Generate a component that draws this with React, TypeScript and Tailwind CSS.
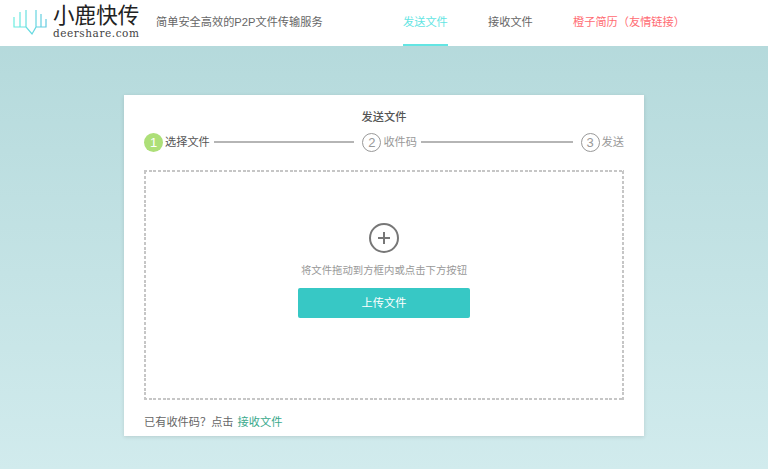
const sans = "font-['Helvetica_Neue','Liberation_Sans','Noto_Sans_CJK_SC',sans-serif]";

function Logo() {
  return (
    <svg width="36" height="30" viewBox="0 0 36 30" fill="none" className="shrink-0">
      <defs>
        <linearGradient id="lg" gradientUnits="userSpaceOnUse" x1="0" y1="0" x2="36" y2="0">
          <stop offset="0" stopColor="#6beee0" />
          <stop offset="1" stopColor="#62c6e0" />
        </linearGradient>
      </defs>
      <path
        d="M1 10V20H7V5V20H13V3V20L19 27L23 20V3V20H28V7V20H33V12"
        stroke="url(#lg)"
        strokeWidth="1.2"
      />
    </svg>
  );
}

function Step({ n, label, active }: { n: number; label: string; active?: boolean }) {
  return (
    <div className="flex items-center shrink-0">
      <div
        className={
          active
            ? "w-[19px] h-[19px] rounded-full bg-[#addf78] text-white text-[13px] leading-[19px] text-center"
            : "w-[19px] h-[19px] rounded-full border border-[#999] text-[#999] text-[13px] leading-[17px] text-center"
        }
      >
        {n}
      </div>
      <span className={active ? "ml-[2px] text-[11.2px] text-[#555]" : "ml-[2px] text-[11.2px] text-[#999]"}>{label}</span>
    </div>
  );
}

export default function App() {
  return (
    <div className={`${sans} w-[768px] h-[469px] overflow-hidden flex flex-col bg-gradient-to-b from-[#b2d8da] to-[#d1ebed]`}>
      <header className="h-[46px] bg-white flex items-stretch shrink-0">
        <div className="flex items-start pl-[13px] w-[156px] shrink-0">
          <div className="pt-[7px]">
            <Logo />
          </div>
          <div className="ml-[4px] pt-[4px] flex flex-col items-start">
            <span className="text-[21.5px] leading-[24px] text-[#222] tracking-[0.1px] whitespace-nowrap">小鹿快传</span>
            <span className="text-[10.5px] leading-[10px] text-[#444] tracking-[0.55px] font-['DejaVu_Serif',serif]">deershare.com</span>
          </div>
        </div>
        <div className="flex items-center pb-[1px] text-[11.2px] text-[#666] w-[247px] shrink-0">简单安全高效的P2P文件传输服务</div>
        <nav className="flex text-[11.2px]">
          <a className="w-[45px] border-b-2 border-[#63e5e3] text-[#63e5e3] flex items-center whitespace-nowrap">发送文件</a>
          <a className="ml-[40px] w-[45px] pb-[2px] text-[#666] flex items-center whitespace-nowrap">接收文件</a>
          <a className="ml-[40px] pb-[2px] text-[#ff6b72] flex items-center whitespace-nowrap">橙子简历（友情链接）</a>
        </nav>
      </header>

      <main className="mt-[49px] mx-auto w-[520px] h-[341px] bg-white shadow-[0_1px_4px_rgba(0,0,0,0.12)] px-[20px] flex flex-col">
        <h2 className="mt-[14px] text-center text-[11.2px] leading-[16px] font-medium text-[#555]">发送文件</h2>
        <div className="mt-[7px] flex items-center h-[20px]">
          <Step n={1} label="选择文件" active />
          <div className="w-[141px] h-[2px] bg-[#b5b5b5] ml-[4px] mr-[8px]" />
          <Step n={2} label="收件码" />
          <div className="w-[152px] h-[2px] bg-[#b5b5b5] ml-[4px] mr-[8px]" />
          <Step n={3} label="发送" />
        </div>
        <div className="mt-[18px] h-[230px] flex flex-col items-center [background:repeating-linear-gradient(90deg,#c6c6c6_0_3px,transparent_3px_4.7px)_top/100%_2px_no-repeat,repeating-linear-gradient(90deg,#c6c6c6_0_3px,transparent_3px_4.7px)_bottom/100%_2px_no-repeat,repeating-linear-gradient(0deg,#c6c6c6_0_3px,transparent_3px_4.7px)_left/2px_100%_no-repeat,repeating-linear-gradient(0deg,#c6c6c6_0_3px,transparent_3px_4.7px)_right/2px_100%_no-repeat]">
          <div className="mt-[53px] w-[30px] h-[30px] rounded-full border-2 border-[#777] flex items-center justify-center">
            <svg width="14" height="14" viewBox="0 0 14 14">
              <path d="M7 1V13M1 7H13" stroke="#777" strokeWidth="2" />
            </svg>
          </div>
          <p className="mt-[10px] text-[10.4px] leading-[16px] text-[#999]">将文件拖动到方框内或点击下方按钮</p>
          <button className="mt-[9px] w-[172px] h-[30px] rounded-[2px] bg-[#37c8c5] text-white text-[11.2px]">上传文件</button>
        </div>
        <p className="mt-[13px] text-[11.2px] leading-[18px] text-[#666]">
          已有收件码？点击 <a className="ml-[1px] text-[#3aa98c]">接收文件</a>
        </p>
      </main>
    </div>
  );
}
